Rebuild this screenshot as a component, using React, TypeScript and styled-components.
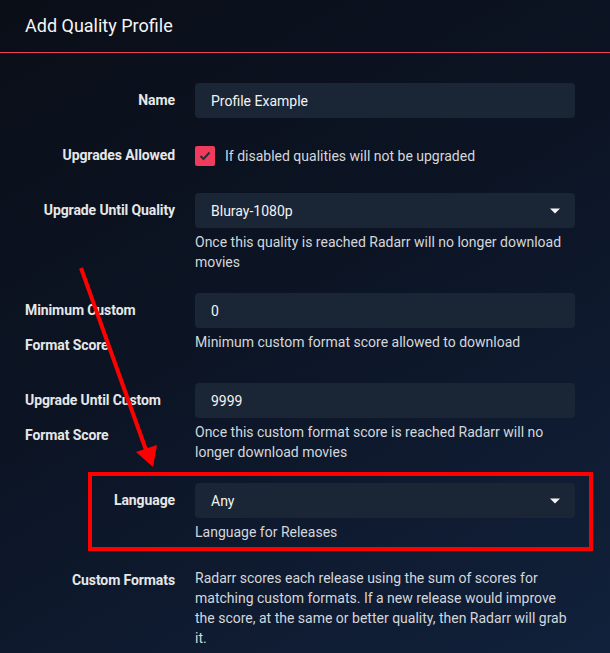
import React from "react";
import styled, { createGlobalStyle } from "styled-components";

const Global = createGlobalStyle`
  html, body { margin: 0; padding: 0; background: #0b111c; }
  body { font-family: Roboto, "Open Sans", "Liberation Sans", sans-serif; font-size: 14px; }
  * { box-sizing: border-box; }
`;

const Page = styled.div`
  position: relative;
  width: 610px;
  height: 653px;
  overflow: hidden;
  background: linear-gradient(150deg, #0a0e17 0%, #0c1424 45%, #11213b 100%);
  color: #e1e2e3;
`;

const Header = styled.div`
  padding: 15px 25px;
  font-size: 18px;
  line-height: 22px;
  color: #f4f5f6;
  border-bottom: 1px solid #f0405c;
`;

const Body = styled.div`
  padding: 30px 35px 0 25px;
`;

const FormGroup = styled.div`
  display: flex;
  margin-bottom: 20px;
`;

const Label = styled.div`
  flex: 0 0 150px;
  display: flex;
  justify-content: flex-end;
  margin-right: 20px;
  font-weight: bold;
  line-height: 35px;
  letter-spacing: -0.1px;
  color: #e6e7e8;
`;

const Field = styled.div`
  flex: 1 1 auto;
  display: flex;
  flex-direction: column;
`;

const Input = styled.div`
  display: flex;
  align-items: center;
  justify-content: space-between;
  height: 35px;
  padding: 0 15px 0 16px;
  border-radius: 4px;
  background: #1a2535;
  color: #f2f3f4;
`;

const Help = styled.div`
  margin-top: 4px;
  padding-bottom: 1px;
  line-height: 20px;
  color: #d4d7db;
`;

const Description = styled.div`
  margin-top: 5px;
  line-height: 20px;
  color: #d4d7db;
`;

const CheckRow = styled.div`
  display: flex;
  align-items: center;
  height: 35px;
  color: #d4d7db;
`;

const Box = styled.span`
  display: inline-flex;
  align-items: center;
  justify-content: center;
  width: 20px;
  height: 20px;
  margin-right: 10px;
  border-radius: 2px;
  background: #f03c5c;
`;

const Highlight = styled.div`
  position: absolute;
  left: 88px;
  top: 472px;
  width: 505px;
  height: 79px;
  border: 4px solid #ff0000;
  pointer-events: none;
`;

const ArrowLayer = styled.svg`
  position: absolute;
  left: 0;
  top: 0;
  pointer-events: none;
`;

const Caret = () => (
  <svg width="10" height="6" viewBox="0 0 10 6">
    <path d="M0 0.5 L10 0.5 L5 5.5 Z" fill="#f4f5f6" />
  </svg>
);

const Check = () => (
  <svg width="12" height="10" viewBox="0 0 12 10">
    <path d="M1.5 5 L4.5 8 L10.5 1.5" fill="none" stroke="#2a2d35" strokeWidth="2" />
  </svg>
);

export default function App() {
  return (
    <>
      <Global />
      <Page>
        <Header>Add Quality Profile</Header>
        <Body>
          <FormGroup>
            <Label>Name</Label>
            <Field>
              <Input>Profile Example</Input>
            </Field>
          </FormGroup>
          <FormGroup>
            <Label>Upgrades Allowed</Label>
            <Field>
              <CheckRow>
                <Box>
                  <Check />
                </Box>
                If disabled qualities will not be upgraded
              </CheckRow>
            </Field>
          </FormGroup>
          <FormGroup>
            <Label>Upgrade Until Quality</Label>
            <Field>
              <Input>
                Bluray-1080p
                <Caret />
              </Input>
              <Help>Once this quality is reached Radarr will no longer download movies</Help>
            </Field>
          </FormGroup>
          <FormGroup>
            <Label>Minimum Custom Format Score</Label>
            <Field>
              <Input>0</Input>
              <Help>Minimum custom format score allowed to download</Help>
            </Field>
          </FormGroup>
          <FormGroup>
            <Label>Upgrade Until Custom Format Score</Label>
            <Field>
              <Input>9999</Input>
              <Help>Once this custom format score is reached Radarr will no longer download movies</Help>
            </Field>
          </FormGroup>
          <FormGroup>
            <Label>Language</Label>
            <Field>
              <Input>
                Any
                <Caret />
              </Input>
              <Help>Language for Releases</Help>
            </Field>
          </FormGroup>
          <FormGroup>
            <Label>Custom Formats</Label>
            <Field>
              <Description>
                Radarr scores each release using the sum of scores for matching custom formats. If a
                new release would improve the score, at the same or better quality, then Radarr will
                grab it.
              </Description>
            </Field>
          </FormGroup>
        </Body>
        <Highlight />
        <ArrowLayer width="610" height="653" viewBox="0 0 610 653">
          <line x1="81" y1="268" x2="146" y2="450" stroke="#ff0000" strokeWidth="4" />
          <polygon points="153,467 136,452 157,445" fill="#ff0000" />
        </ArrowLayer>
      </Page>
    </>
  );
}
